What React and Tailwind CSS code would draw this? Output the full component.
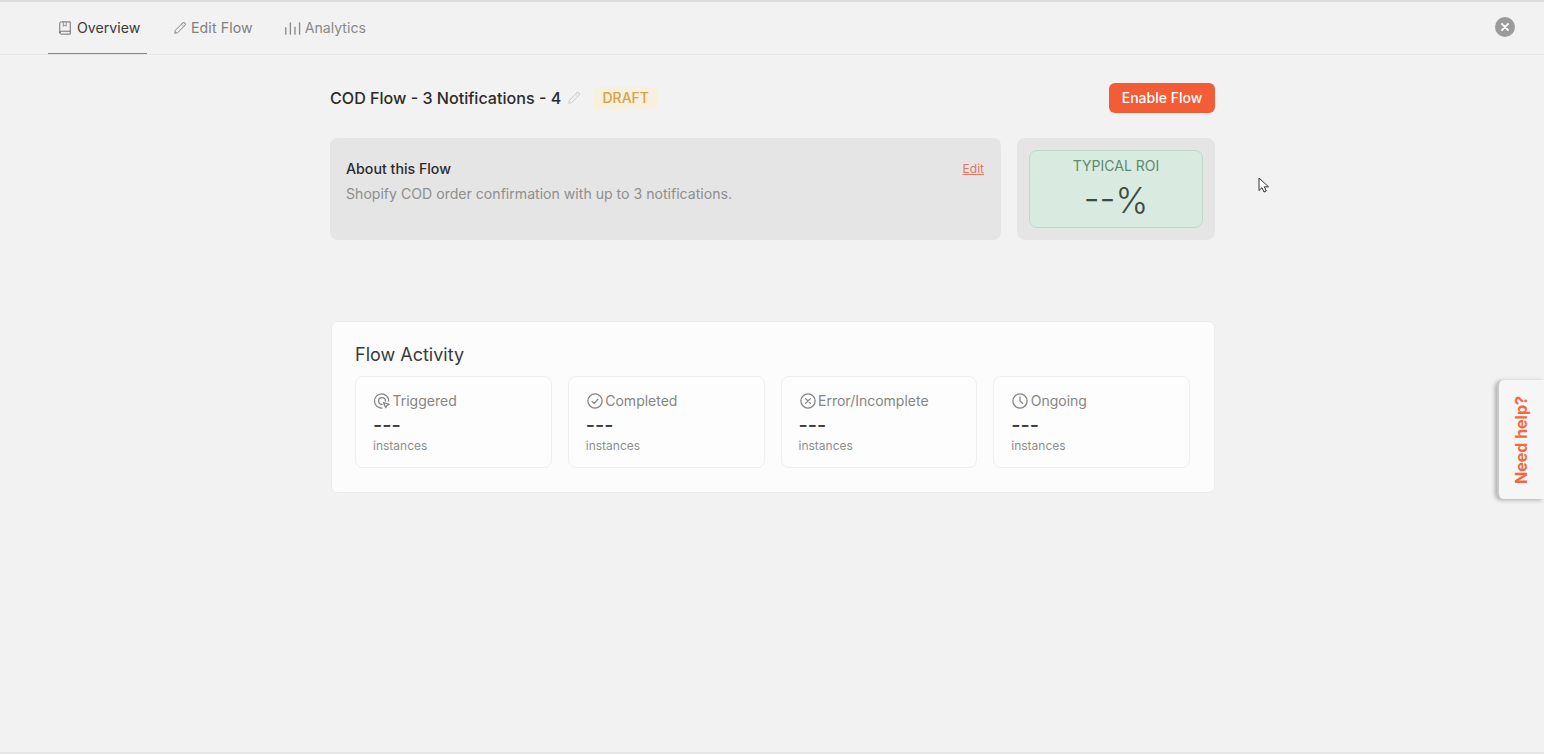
import React from "react";

const Icon = ({ children, size = 16 }) => (
  <svg width={size} height={size} viewBox="0 0 24 24" fill="none" stroke="currentColor" strokeWidth="1.7" strokeLinecap="round" strokeLinejoin="round" className="shrink-0">
    {children}
  </svg>
);

const Book = () => (
  <Icon size={14}>
    <path d="M3 20V4a2.500 2.500 0 0 1 2.500-2.500H21v16H5.500A2.500 2.500 0 0 0 3 20Zm0 0a2.500 2.500 0 0 0 2.500 2.500H21v-5" />
    <path d="M9 2v7l2.500-1.500L14 9V2" strokeWidth="1.3" />
  </Icon>
);
const Pencil = ({ size = 14 }) => (
  <Icon size={size}>
    <path d="M16.500 3.500a2.800 2.800 0 0 1 4 4L8 20l-5 1 1-5L16.500 3.500Z" />
    <path d="M14.500 5.500l4 4" strokeWidth="1" />
  </Icon>
);
const Bars = () => (
  <Icon size={17}>
    <path d="M2.500 11v9M9 4v16M15.500 10v10M22 4v16" strokeWidth="1.9" />
  </Icon>
);
const Trigger = () => (
  <Icon size={18}>
    <path d="M21 12a9.500 9.500 0 1 0-9 9.500" />
    <path d="M16.500 12a4.500 4.500 0 1 0-4.500 4.500" />
    <path d="M14 14l7.500 2.500-3 1.500-1.500 3L14 14Z" />
  </Icon>
);
const Check = () => (
  <Icon size={18}>
    <circle cx="12" cy="12" r="9.500" />
    <path d="M8 12.500l2.800 2.800L16 9.500" />
  </Icon>
);
const XCircle = () => (
  <Icon size={18}>
    <circle cx="12" cy="12" r="9.500" />
    <path d="M8.800 8.800l6.400 6.400M15.200 8.800l-6.400 6.400" />
  </Icon>
);
const Clock = () => (
  <Icon size={18}>
    <circle cx="12" cy="12" r="9.500" />
    <path d="M12 6.500V12l3.500 3" />
  </Icon>
);

const stats = [
  { label: "Triggered", icon: <Trigger /> },
  { label: "Completed", icon: <Check /> },
  { label: "Error/Incomplete", icon: <XCircle /> },
  { label: "Ongoing", icon: <Clock /> },
];

export default function App() {
  return (
    <div className="relative h-[754px] w-[1544px] overflow-hidden bg-[#f2f2f2] font-['Inter',sans-serif]">
      <div className="h-[2px] bg-[#dcdcdc]" />
      <header className="flex h-[53px] items-center justify-between border-b border-[#e6e6e6] pl-12 pr-[29px]">
        <nav className="flex h-full items-center text-[14.15px]">
          <div className="relative flex h-full w-[99px] items-center gap-[5px] pl-[10px] text-[#3a3a3a]">
            <span className="text-[#707070]"><Book /></span>
            <span>Overview</span>
            <span className="absolute right-0 bottom-0 left-0 h-px bg-[#ee5f3c]" />
          </div>
          <div className="ml-[26px] flex h-full items-center gap-[4px] text-[#808080]">
            <Pencil />
            <span className="tracking-[0.1px]">Edit Flow</span>
          </div>
          <div className="ml-[31px] flex h-full items-center gap-[4px] text-[#8a8a8a]">
            <Bars />
            <span>Analytics</span>
          </div>
        </nav>
        <button className="mb-[2px] flex h-5 w-5 items-center justify-center rounded-full bg-[#9b9b9b] text-white">
          <svg width="10" height="10" viewBox="0 0 10 10" stroke="currentColor" strokeWidth="1.8" strokeLinecap="round"><path d="M2 2l6 6M8 2l-6 6" /></svg>
        </button>
      </header>

      <main className="ml-[330px] w-[885px] pt-7">
        <div className="flex h-[30px] items-center justify-between">
          <div className="flex items-center">
            <h1 className="text-[16.1px] font-medium text-[#2b2b2b]">COD Flow - 3 Notifications - 4</h1>
            <span className="ml-[6px] text-[#c8c8c8]"><Pencil /></span>
            <span className="ml-[13px] flex h-[22px] w-[63px] items-center justify-center rounded bg-[#f8f0dc] text-[14px] font-medium text-[#d4a24a]">DRAFT</span>
          </div>
          <button className="h-[30px] w-[106px] rounded-md bg-[#f25c37] text-sm font-medium text-white">Enable Flow</button>
        </div>

        <div className="mt-[25px] flex h-[102px] gap-4">
          <section className="flex-1 rounded-lg bg-[#e5e5e5] px-4 pt-[22px]">
            <div className="flex items-center justify-between">
              <h2 className="text-[14.2px] leading-[18px] font-medium text-[#2b2b2b]">About this Flow</h2>
              <a className="mr-[1px] text-xs text-[#e2785f] underline">Edit</a>
            </div>
            <p className="mt-[7px] text-[14.1px] leading-[18px] text-[#8e8e8e]">Shopify COD order confirmation with up to 3 notifications.</p>
          </section>
          <section className="w-[198px] rounded-lg bg-[#e5e5e5] p-3">
            <div className="flex h-[78px] flex-col items-center rounded-lg border border-[#bcdccb] bg-[#d9ebe1] pt-[6px]">
              <span className="text-sm leading-[18px] text-[#5c8a70]">TYPICAL ROI</span>
              <span className="mt-[5px] text-[35px] leading-[40px] font-[350] text-[#3b4a42]">--%</span>
            </div>
          </section>
        </div>

        <section className="mt-[81px] ml-px h-[172px] rounded-md border border-[#ececec] bg-[#fcfcfc] pt-[20px] pr-6 pl-[23px]">
          <h2 className="text-lg leading-[26px] text-[#3a3a3a]">Flow Activity</h2>
          <div className="mt-[8px] grid grid-cols-4 gap-4">
            {stats.map((s) => (
              <div key={s.label} className="h-[92px] rounded-lg border border-[#efefef] bg-[#fdfdfd] px-[17px] pt-[14px]">
                <div className="flex h-5 items-center gap-[1.5px] text-sm text-[#858585]">
                  {s.icon}
                  <span>{s.label}</span>
                </div>
                <div className="mt-[4px] text-xl leading-[20px] font-medium text-[#3a3a3a]">---</div>
                <div className="mt-[3px] text-xs leading-[16px] text-[#8f8f8f]">instances</div>
              </div>
            ))}
          </div>
        </section>
      </main>

      <aside className="absolute top-[380px] left-[1497px] flex h-[119px] w-[47px] items-center justify-center rounded-l-md border-l-[2px] border-[#c9c9c9] bg-[#f6f6f6] pr-[2px] shadow-[-2px_1px_4px_rgba(0,0,0,0.3)]">
        <span className="rotate-180 text-base font-bold text-[#f2693f] [writing-mode:vertical-rl]">Need help?</span>
      </aside>

      <svg className="absolute top-[177px] left-[1258px]" width="13" height="18" viewBox="0 0 13 18" fill="#fff" stroke="#333" strokeWidth="1">
        <path d="M1 1v12.500l3-2.800 2 4.300 2.300-1-2-4.200h4.200L1 1Z" />
      </svg>

      <div className="absolute bottom-0 left-0 h-[2px] w-full bg-[#e6e6e6]" />
    </div>
  );
}
